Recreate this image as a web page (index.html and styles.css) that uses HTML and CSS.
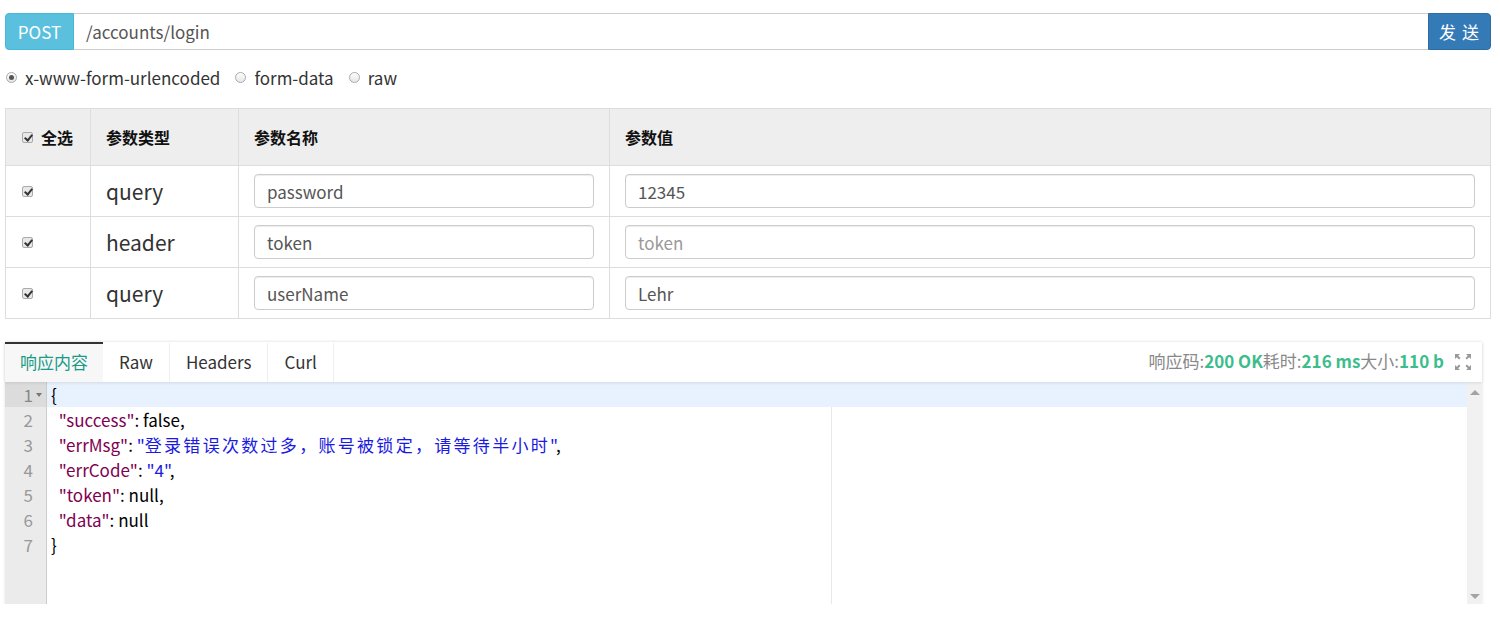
FILE: index.html
```html
<!DOCTYPE html>
<html>
<head>
<meta charset="utf-8">
<link rel="stylesheet" href="styles.css">
</head>
<body>
<div class="page">
  <div class="urlbar">
    <span class="method">POST</span>
    <div class="url">/accounts/login</div>
    <button class="send">发 送</button>
  </div>

  <div class="radios">
    <label class="radio"><span class="rdot on"></span>x-www-form-urlencoded</label>
    <label class="radio"><span class="rdot"></span>form-data</label>
    <label class="radio"><span class="rdot"></span>raw</label>
  </div>

  <table class="params">
    <thead>
      <tr>
        <th class="c1"><span class="cb hdr"></span>全选</th>
        <th class="c2">参数类型</th>
        <th class="c3">参数名称</th>
        <th class="c4">参数值</th>
      </tr>
    </thead>
    <tbody>
      <tr>
        <td class="c1"><span class="cb"></span></td>
        <td class="c2 type">query</td>
        <td class="c3"><div class="inp">password</div></td>
        <td class="c4"><div class="inp">12345</div></td>
      </tr>
      <tr>
        <td class="c1"><span class="cb"></span></td>
        <td class="c2 type">header</td>
        <td class="c3"><div class="inp">token</div></td>
        <td class="c4"><div class="inp ph">token</div></td>
      </tr>
      <tr>
        <td class="c1"><span class="cb"></span></td>
        <td class="c2 type">query</td>
        <td class="c3"><div class="inp">userName</div></td>
        <td class="c4"><div class="inp">Lehr</div></td>
      </tr>
    </tbody>
  </table>

  <div class="resp">
    <div class="tabs">
      <div class="tab active">响应内容</div>
      <div class="tab">Raw</div>
      <div class="tab">Headers</div>
      <div class="tab">Curl</div>
      <div class="status">响应码:<b>200 OK</b>耗时:<b>216 ms</b>大小:<b>110 b</b></div>
      <svg class="fs" width="18" height="18" viewBox="0 0 18 18">
        <g fill="#999">
          <path d="M1 1h5l-1.8 1.8 2.3 2.3-1.4 1.4-2.3-2.3L1 6z"/>
          <path d="M17 1h-5l1.8 1.8-2.3 2.3 1.4 1.4 2.3-2.3L17 6z"/>
          <path d="M1 17h5l-1.8-1.8 2.3-2.3-1.4-1.4-2.3 2.3L1 12z"/>
          <path d="M17 17h-5l1.8-1.8-2.3-2.3 1.4-1.4 2.3 2.3L17 12z"/>
        </g>
      </svg>
    </div>
    <div class="editor">
      <div class="gutter">
        <div class="ln active">1<span class="fold"></span></div>
        <div class="ln">2</div>
        <div class="ln">3</div>
        <div class="ln">4</div>
        <div class="ln">5</div>
        <div class="ln">6</div>
        <div class="ln">7</div>
      </div>
      <div class="code">
        <div class="margin"></div>
        <div class="line active">{</div>
        <div class="line">&nbsp;&nbsp;<span class="k">"success"</span>: false,</div>
        <div class="line">&nbsp;&nbsp;<span class="k">"errMsg"</span>: <span class="s">"<span class="cjk">登录错误次数过多，账号被锁定，请等待半小时</span>"</span>,</div>
        <div class="line">&nbsp;&nbsp;<span class="k">"errCode"</span>: <span class="s">"4"</span>,</div>
        <div class="line">&nbsp;&nbsp;<span class="k">"token"</span>: null,</div>
        <div class="line">&nbsp;&nbsp;<span class="k">"data"</span>: null</div>
        <div class="line">}</div>
      </div>
      <div class="scroll">
        <span class="up"></span>
        <span class="down"></span>
      </div>
    </div>
  </div>
</div>
</body>
</html>
```

FILE: styles.css
```css
* { box-sizing: border-box; }
html, body { margin: 0; padding: 0; background: #fff; }
body {
  font-family: "Noto Sans CJK SC", "Source Sans Pro", sans-serif;
  color: #333;
}
.page {
  width: 1486px;
  margin-left: 5px;
  padding-top: 13px;
}

/* URL bar */
.urlbar {
  display: flex;
  height: 37px;
}
.method {
  width: 69px;
  background: #5bc0de;
  color: #fff;
  font-size: 17px;
  display: flex;
  align-items: center;
  justify-content: center;
  border-radius: 4px 0 0 4px;
  border: 1px solid #46b8da;
}
.url {
  flex: 1;
  border-top: 1px solid #ccc;
  border-bottom: 1px solid #ccc;
  font-size: 17px;
  color: #555;
  padding-left: 12px;
  display: flex;
  align-items: center;
}
.send {
  width: 63px;
  background: #337ab7;
  border: 1px solid #2e6da4;
  color: #fff;
  border-radius: 0 4px 4px 0;
  font-family: inherit;
  font-size: 17px;
  padding: 0;
  letter-spacing: 1px;
}

/* radios */
.radios {
  display: flex;
  align-items: center;
  gap: 14px;
  height: 30px;
  margin-top: 12px;
  font-size: 17px;
  color: #333;
}
.radio {
  display: flex;
  align-items: center;
  gap: 8px;
}
.rdot {
  width: 11px;
  height: 11px;
  border-radius: 50%;
  border: 1px solid #aaa;
  background: linear-gradient(#fdfdfd, #e6e6e6);
  position: relative;
  margin-left: 1px;
}
.rdot.on::after {
  content: "";
  position: absolute;
  left: 2px; top: 2px;
  width: 5px; height: 5px;
  border-radius: 50%;
  background: #555;
}

/* table */
.params {
  width: 100%;
  border-collapse: collapse;
  margin-top: 16px;
}
.params th, .params td {
  border: 1px solid #ddd;
  text-align: left;
  padding: 0 15px;
  white-space: nowrap;
}
.params th {
  background: #eee;
  height: 57px;
  font-size: 16px;
  font-weight: bold;
  color: #111;
}
.params td { height: 51px; }
.c1 { width: 85px; padding-left: 16px !important; padding-right: 0 !important; }
.c2 { width: 148px; }
.c3 { width: 371px; }
.type { font-size: 21px; color: #333; }
.cb {
  display: inline-block;
  width: 11px;
  height: 11px;
  border: 1px solid #aaa;
  border-radius: 2px;
  background: #e8e8e8;
  position: relative;
  vertical-align: 1px;
}
.cb::after {
  content: "";
  position: absolute;
  left: 3px; top: 0px;
  width: 3px; height: 6px;
  border: solid #333;
  border-width: 0 2px 2px 0;
  transform: rotate(40deg);
}
.hdr { margin-right: 8px; }
.inp {
  height: 34px;
  border: 1px solid #ccc;
  border-radius: 4px;
  font-size: 17px;
  color: #555;
  padding-left: 12px;
  display: flex;
  align-items: center;
  box-shadow: inset 0 1px 1px rgba(0,0,0,.075);
}
.inp.ph { color: #999; }

/* response */
.resp {
  margin-top: 23px;
  width: 1477px;
  box-shadow: 0 0 3px rgba(0,0,0,0.12);
}
.tabs {
  display: flex;
  align-items: center;
  height: 40px;
  background: #fff;
  box-shadow: 0 1px 3px rgba(0,0,0,0.1);
  position: relative;
  z-index: 2;
}
.tab {
  height: 40px;
  padding: 0 16px 3px 16px;
  display: flex;
  align-items: center;
  font-size: 17px;
  color: #333;
  border-right: 1px solid #eee;
  border-top: 2px solid transparent;
}
.tab.active {
  padding: 0 15px 3px 15px;
  background: #f7f7f7;
  border-top-color: #333;
  color: #1a9b87;
  border-right: none;
}
.status {
  margin-left: auto;
  font-size: 17px;
  color: #888;
  padding-bottom: 3px;
}
.status b { color: #3dbd8c; font-weight: bold; }
.fs { margin: 0 10px 0 10px; }

.editor {
  display: flex;
  height: 222px;
  font-size: 17px;
  line-height: 25px;
  background: #fff;
}
.gutter {
  width: 42px;
  background: #ebebeb;
  border-right: 1px solid #ccc;
  color: #999;
}
.ln {
  height: 25px;
  text-align: right;
  padding-right: 13px;
  position: relative;
}
.ln.active { background: #dcdcdc; color: #888; }
.fold {
  position: absolute;
  right: 4px; top: 11px;
  border-left: 3px solid transparent;
  border-right: 3px solid transparent;
  border-top: 4px solid #777;
}
.code {
  flex: 1;
  position: relative;
  color: #000;
}
.margin {
  position: absolute;
  left: 784px; top: 25px; bottom: 0;
  width: 1px;
  background: #e8e8e8;
}
.line { height: 25px; padding-left: 4px; white-space: pre; }
.line.active { background: #e8f2fe; }
.k { color: #800052; }
.s { color: #1a1ae0; }
.cjk { letter-spacing: 2.3px; }
.scroll {
  width: 15px;
  background: #f1f1f1;
  position: relative;
}
.up, .down {
  position: absolute;
  left: 3px;
  border-left: 5px solid transparent;
  border-right: 5px solid transparent;
}
.up { top: 8px; border-bottom: 5px solid #a3a3a3; }
.down { bottom: 5px; border-top: 5px solid #a3a3a3; }
```
